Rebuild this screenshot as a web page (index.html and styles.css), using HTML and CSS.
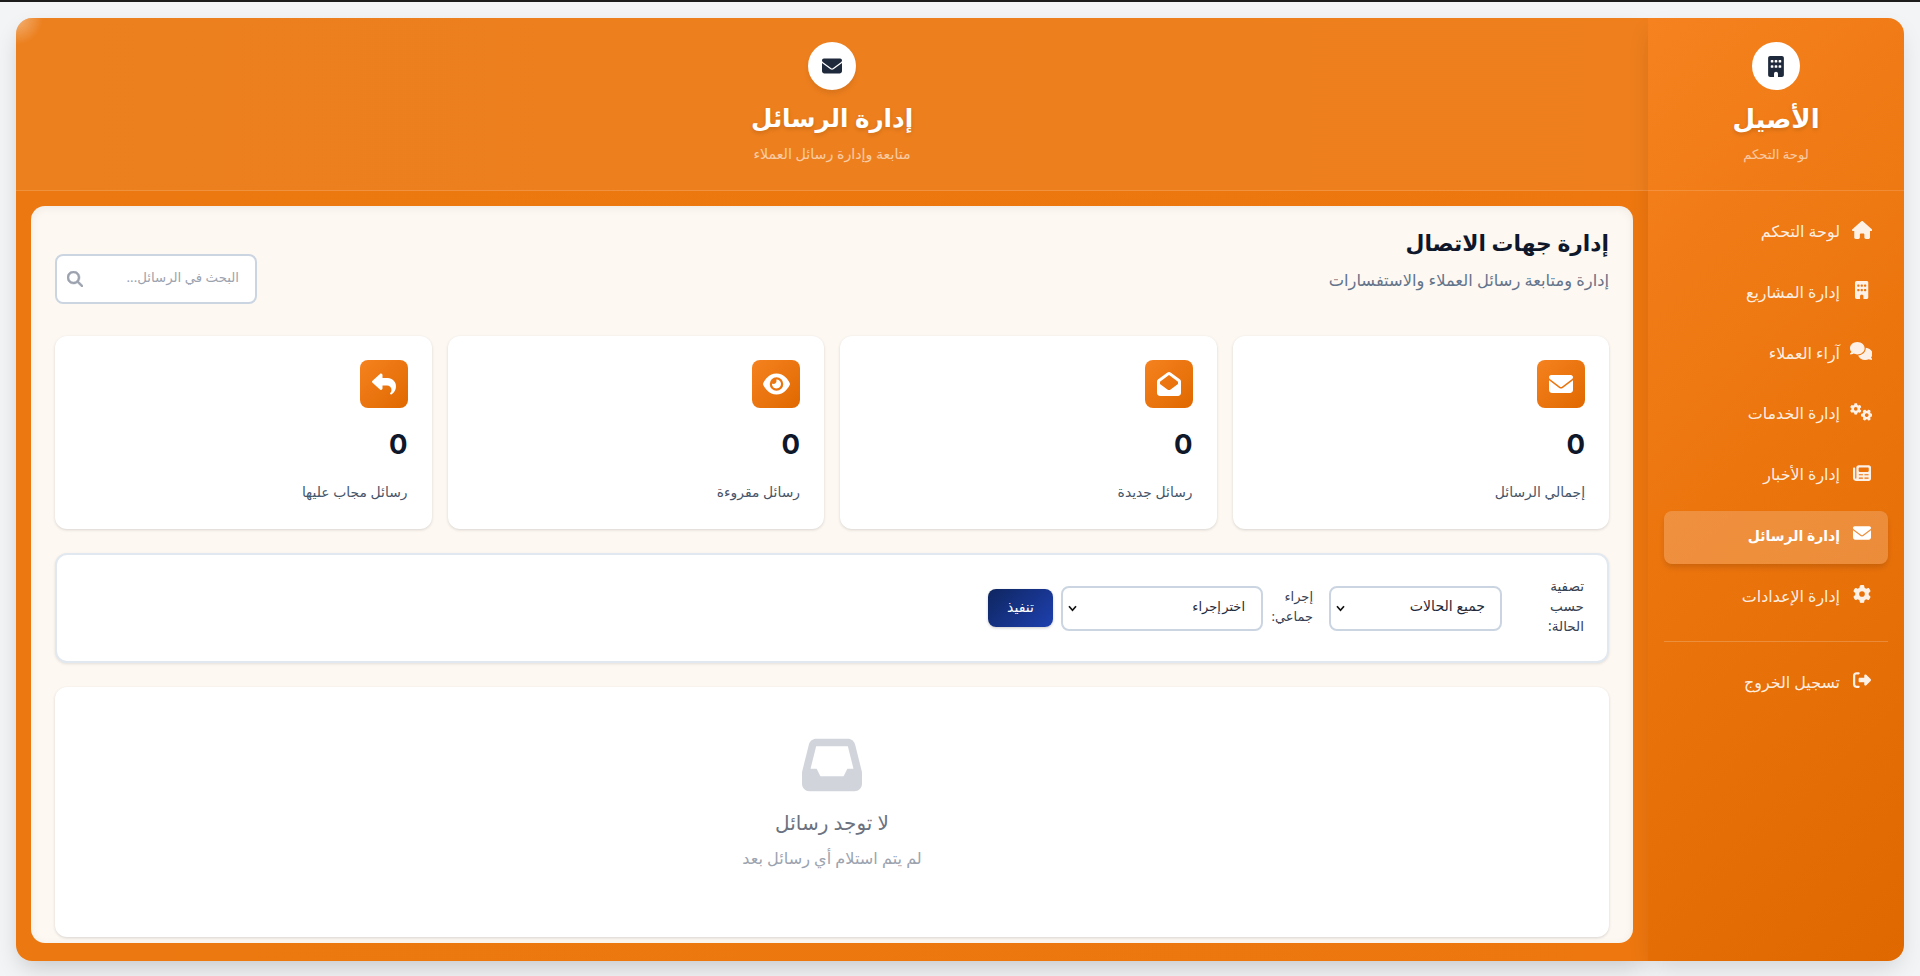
FILE: index.html
```html
<!DOCTYPE html>
<html lang="ar" dir="rtl">
<head>
    <meta charset="UTF-8">
    <title>إدارة الرسائل</title>
    <meta name="viewport" content="width=device-width, initial-scale=1">
    <link rel="stylesheet" href="styles.css">
</head>
<body>
    <!-- Icon set -->
    <svg class="sprite" width="0" height="0">
        <symbol id="envelope" viewBox="0 0 512 512"><path d="M48 64C21.5 64 0 85.5 0 112c0 15.1 7.1 29.3 19.2 38.4L236.8 313.6c11.4 8.5 27 8.5 38.4 0L492.8 150.4c12.1-9.1 19.2-23.3 19.2-38.4c0-26.5-21.5-48-48-48H48zM0 176V384c0 35.3 28.7 64 64 64H448c35.3 0 64-28.7 64-64V176L294.4 339.2c-22.8 17.1-54 17.1-76.8 0L0 176z"/></symbol>
        <symbol id="building" viewBox="0 0 384 512"><path d="M48 0C21.5 0 0 21.5 0 48V464c0 26.5 21.5 48 48 48h96V432c0-26.5 21.5-48 48-48s48 21.5 48 48v80h96c26.5 0 48-21.5 48-48V48c0-26.5-21.5-48-48-48H48zM64 240c0-8.8 7.2-16 16-16h32c8.8 0 16 7.2 16 16v32c0 8.8-7.2 16-16 16H80c-8.8 0-16-7.2-16-16V240zm112-16h32c8.8 0 16 7.2 16 16v32c0 8.8-7.2 16-16 16H176c-8.8 0-16-7.2-16-16V240c0-8.8 7.2-16 16-16zm80 16c0-8.8 7.2-16 16-16h32c8.8 0 16 7.2 16 16v32c0 8.8-7.2 16-16 16H272c-8.8 0-16-7.2-16-16V240zM80 96h32c8.8 0 16 7.2 16 16v32c0 8.8-7.2 16-16 16H80c-8.8 0-16-7.2-16-16V112c0-8.8 7.2-16 16-16zm80 16c0-8.8 7.2-16 16-16h32c8.8 0 16 7.2 16 16v32c0 8.8-7.2 16-16 16H176c-8.8 0-16-7.2-16-16V112zM272 96h32c8.8 0 16 7.2 16 16v32c0 8.8-7.2 16-16 16H272c-8.8 0-16-7.2-16-16V112c0-8.8 7.2-16 16-16z"/></symbol>
        <symbol id="home" viewBox="0 0 576 512"><path d="M575.8 255.5c0 18-15 32.1-32 32.1h-32l.7 160.2c0 2.7-.2 5.4-.5 8.1V472c0 22.1-17.9 40-40 40H456c-1.1 0-2.2 0-3.3-.1c-1.4 .1-2.8 .1-4.2 .1H416 392c-22.1 0-40-17.9-40-40V448 384c0-17.7-14.3-32-32-32H256c-17.7 0-32 14.3-32 32v64 24c0 22.1-17.9 40-40 40H160 128.1c-1.5 0-3-.1-4.5-.2c-1.2 .1-2.4 .2-3.6 .2H104c-22.1 0-40-17.9-40-40V360c0-.9 0-1.9 .1-2.8V287.6H32c-18 0-32-14-32-32.1c0-9 3-17 10-24L266.4 8c7-7 15-8 22-8s15 2 21 7L564.8 231.5c8 7 12 15 11 24z"/></symbol>
        <symbol id="comments" viewBox="0 0 640 512"><path d="M208 352c114.9 0 208-78.8 208-176S322.9 0 208 0S0 78.8 0 176c0 38.6 14.7 74.3 39.6 103.4c-3.5 9.4-8.7 17.7-14.2 24.7c-4.8 6.2-9.7 11-13.3 14.3c-1.8 1.6-3.3 2.9-4.3 3.7c-.5 .4-.9 .7-1.1 .8l-.2 .2C1 327.2-1.4 334.4 .8 340.9S9.1 352 16 352c21.8 0 43.8-5.6 62.1-12.5c9.2-3.5 17.8-7.4 25.3-11.4C134.1 343.3 169.8 352 208 352zM448 176c0 112.3-99.1 196.9-216.5 207C255.8 457.4 336.4 512 432 512c38.2 0 73.9-8.7 104.7-23.9c7.5 4 16 7.9 25.2 11.4c18.3 6.9 40.3 12.5 62.1 12.5c6.9 0 13.1-4.5 15.2-11.1c2.1-6.6-.2-13.8-5.8-17.9l-.2-.2c-.2-.2-.6-.4-1.1-.8c-1-.8-2.5-2-4.3-3.7c-3.6-3.3-8.5-8.1-13.3-14.3c-5.5-7-10.7-15.4-14.2-24.7c24.9-29 39.6-64.7 39.6-103.4c0-92.8-84.9-168.9-192.6-175.5c.4 5.1 .6 10.3 .6 15.5z"/></symbol>
        <symbol id="cog" viewBox="0 0 512 512"><path id="cog-shape" d="M495.9 166.6c3.2 8.7 .5 18.4-6.4 24.6l-43.3 39.4c1.1 8.3 1.7 16.8 1.7 25.4s-.6 17.1-1.7 25.4l43.3 39.4c6.9 6.2 9.6 15.9 6.4 24.6c-4.4 11.9-9.7 23.3-15.8 34.3l-4.7 8.1c-6.6 11-14 21.4-22.1 31.2c-5.9 7.2-15.7 9.6-24.5 6.8l-55.7-17.7c-13.4 10.3-28.2 18.9-44 25.4l-12.5 57.1c-2 9.1-9 16.3-18.2 17.8c-13.8 2.3-28 3.5-42.5 3.5s-28.7-1.2-42.5-3.5c-9.2-1.5-16.2-8.7-18.2-17.8l-12.5-57.1c-15.8-6.5-30.6-15.1-44-25.4L83.1 425.9c-8.8 2.8-18.6 .3-24.5-6.8c-8.1-9.8-15.5-20.2-22.1-31.2l-4.7-8.1c-6.1-11-11.4-22.4-15.8-34.3c-3.2-8.7-.5-18.4 6.4-24.6l43.3-39.4C64.6 273.1 64 264.6 64 256s.6-17.1 1.7-25.4L22.4 191.2c-6.9-6.2-9.6-15.9-6.4-24.6c4.4-11.9 9.7-23.3 15.8-34.3l4.7-8.1c6.6-11 14-21.4 22.1-31.2c5.9-7.2 15.7-9.6 24.5-6.8l55.7 17.7c13.4-10.3 28.2-18.9 44-25.4l12.5-57.1c2-9.1 9-16.3 18.2-17.8C227.3 1.2 241.5 0 256 0s28.7 1.2 42.5 3.5c9.2 1.5 16.2 8.7 18.2 17.8l12.5 57.1c15.8 6.5 30.6 15.1 44 25.4l55.7-17.7c8.8-2.8 18.6-.3 24.5 6.8c8.1 9.8 15.5 20.2 22.1 31.2l4.7 8.1c6.1 11 11.4 22.4 15.8 34.3zM256 336a80 80 0 1 0 0-160 80 80 0 1 0 0 160z"/></symbol>
        <symbol id="cogs" viewBox="0 0 640 512"><use href="#cog-shape" transform="translate(0 4) scale(.64)"/><use href="#cog-shape" transform="translate(476 344) scale(.64) rotate(30) translate(-256 -256)"/></symbol>
        <symbol id="newspaper" viewBox="0 0 512 512"><path d="M96 96c0-35.3 28.7-64 64-64H448c35.3 0 64 28.7 64 64V416c0 35.3-28.7 64-64 64H80c-44.2 0-80-35.8-80-80V128c0-17.7 14.3-32 32-32s32 14.3 32 32V400c0 8.8 7.2 16 16 16s16-7.2 16-16V96zm64 24v80c0 13.3 10.7 24 24 24H424c13.3 0 24-10.7 24-24V120c0-13.3-10.7-24-24-24H184c-13.3 0-24 10.7-24 24zm0 184c0 8.8 7.2 16 16 16h96c8.8 0 16-7.2 16-16s-7.2-16-16-16H176c-8.8 0-16 7.2-16 16zm160 0c0 8.8 7.2 16 16 16h96c8.8 0 16-7.2 16-16s-7.2-16-16-16H336c-8.8 0-16 7.2-16 16zM160 400c0 8.8 7.2 16 16 16h96c8.8 0 16-7.2 16-16s-7.2-16-16-16H176c-8.8 0-16 7.2-16 16zm160 0c0 8.8 7.2 16 16 16h96c8.8 0 16-7.2 16-16s-7.2-16-16-16H336c-8.8 0-16 7.2-16 16z"/></symbol>
        <symbol id="sign-out" viewBox="0 0 512 512"><path d="M377.9 105.9L500.7 228.7c7.2 7.2 11.3 17.1 11.3 27.3s-4.1 20.1-11.3 27.3L377.9 406.1c-6.4 6.4-15 9.9-24 9.9c-18.7 0-33.9-15.2-33.9-33.9l0-62.1-128 0c-17.7 0-32-14.3-32-32l0-64c0-17.7 14.3-32 32-32l128 0 0-62.1c0-18.7 15.2-33.9 33.9-33.9c9 0 17.6 3.6 24 9.9zM160 96L96 96c-17.7 0-32 14.3-32 32l0 256c0 17.7 14.3 32 32 32l64 0c17.7 0 32 14.3 32 32s-14.3 32-32 32l-64 0c-53 0-96-43-96-96L0 128C0 75 43 32 96 32l64 0c17.7 0 32 14.3 32 32s-14.3 32-32 32z"/></symbol>
        <symbol id="search" viewBox="0 0 512 512"><path d="M416 208c0 45.9-14.9 88.3-40 122.7L502.6 457.4c12.5 12.5 12.5 32.8 0 45.3s-32.8 12.5-45.3 0L330.7 376c-34.4 25.2-76.8 40-122.7 40C93.1 416 0 322.9 0 208S93.1 0 208 0S416 93.1 416 208zM208 352a144 144 0 1 0 0-288 144 144 0 1 0 0 288z"/></symbol>
        <symbol id="envelope-open" viewBox="0 0 512 512"><path d="M64 208.1L256 65.9 448 208.1v47.4L289.5 373c-9.7 7.2-21.4 11-33.5 11s-23.8-3.9-33.5-11L64 255.5V208.1zM256 0c-12.1 0-23.8 3.9-33.5 11L25.9 156.7C9.6 168.8 0 187.8 0 208.1V448c0 35.3 28.7 64 64 64H448c35.3 0 64-28.7 64-64V208.1c0-20.3-9.6-39.4-25.9-51.4L289.5 11C279.8 3.9 268.1 0 256 0z"/></symbol>
        <symbol id="eye" viewBox="0 0 576 512"><path d="M288 32c-80.8 0-145.5 36.8-192.6 80.6C48.6 156 17.3 208 2.5 243.7c-3.3 7.9-3.3 16.7 0 24.6C17.3 304 48.6 356 95.4 399.4C142.5 443.2 207.2 480 288 480s145.5-36.8 192.6-80.6c46.8-43.5 78.1-95.4 93-131.1c3.3-7.9 3.3-16.7 0-24.6c-14.9-35.7-46.2-87.7-93-131.1C433.5 68.8 368.8 32 288 32zM144 256a144 144 0 1 1 288 0 144 144 0 1 1 -288 0zm144-64c0 35.3-28.7 64-64 64c-7.1 0-13.9-1.2-20.3-3.3c-5.5-1.8-11.9 1.6-11.7 7.4c.3 6.9 1.3 13.8 3.2 20.7c13.7 51.2 66.4 81.6 117.6 67.9s81.6-66.4 67.9-117.6c-11.1-41.5-47.8-69.4-88.6-71.1c-5.8-.2-9.2 6.1-7.4 11.7c2.1 6.4 3.3 13.2 3.3 20.3z"/></symbol>
        <symbol id="reply" viewBox="0 0 512 512"><path d="M205 34.8c11.5 5.1 19 16.6 19 29.2v64H336c97.2 0 176 78.8 176 176c0 113.3-81.5 163.9-100.2 174.1c-2.5 1.4-5.3 1.9-8.1 1.9c-10.9 0-19.7-8.9-19.7-19.7c0-7.5 4.3-14.4 9.8-19.5c9.4-8.8 22.2-26.4 22.2-56.7c0-53-43-96-96-96H224v64c0 12.6-7.4 24.1-19 29.2s-25 3-34.4-5.4l-160-144C3.9 225.7 0 217.1 0 208s3.9-17.7 10.6-23.8l160-144c9.4-8.5 22.9-10.6 34.4-5.4z"/></symbol>
        <symbol id="inbox" viewBox="0 0 512 512"><path d="M121 32C91.6 32 66 52 58.9 80.5L1.9 308.4C.6 313.5 0 318.7 0 323.9V416c0 35.3 28.7 64 64 64H448c35.3 0 64-28.7 64-64V323.9c0-5.2-.6-10.4-1.9-15.5l-57-227.9C446 52 420.4 32 391 32H121zm0 64H391l48 192H387l-32 64H157l-32-64H73L121 96z"/></symbol>
    </svg>

    <div class="layout">
        <aside class="sidebar">
            <div class="top-box">
                <div class="logo"><svg width="16" height="21"><use href="#building"/></svg></div>
                <h1 class="brand">الأصيل</h1>
                <p class="brand-sub">لوحة التحكم</p>
            </div>
            <nav class="nav">
                <a class="nav-item" href="#"><span class="nav-icon"><svg width="20.25" height="18"><use href="#home"/></svg></span><span class="nav-text">لوحة التحكم</span></a>
                <a class="nav-item" href="#"><span class="nav-icon"><svg width="13.5" height="18"><use href="#building"/></svg></span><span class="nav-text">إدارة المشاريع</span></a>
                <a class="nav-item" href="#"><span class="nav-icon"><svg width="22.5" height="18"><use href="#comments"/></svg></span><span class="nav-text">آراء العملاء</span></a>
                <a class="nav-item" href="#"><span class="nav-icon"><svg width="22.5" height="18"><use href="#cogs"/></svg></span><span class="nav-text">إدارة الخدمات</span></a>
                <a class="nav-item" href="#"><span class="nav-icon"><svg width="18" height="18"><use href="#newspaper"/></svg></span><span class="nav-text">إدارة الأخبار</span></a>
                <a class="nav-item active" href="#"><span class="nav-icon"><svg width="18" height="18"><use href="#envelope"/></svg></span><span class="nav-text">إدارة الرسائل</span></a>
                <a class="nav-item" href="#"><span class="nav-icon"><svg width="18" height="18"><use href="#cog"/></svg></span><span class="nav-text">إدارة الإعدادات</span></a>
                <div class="nav-divider"></div>
                <a class="nav-item" href="#"><span class="nav-icon"><svg width="18" height="18"><use href="#sign-out"/></svg></span><span class="nav-text">تسجيل الخروج</span></a>
            </nav>
        </aside>

        <main class="main">
            <header class="top-box main-top">
                <div class="logo"><svg width="20" height="20"><use href="#envelope"/></svg></div>
                <h1 class="brand">إدارة الرسائل</h1>
                <p class="brand-sub">متابعة وإدارة رسائل العملاء</p>
            </header>

            <section class="panel">
                <div class="page-header">
                    <div>
                        <h2 class="page-title">إدارة جهات الاتصال</h2>
                        <p class="page-sub">إدارة ومتابعة رسائل العملاء والاستفسارات</p>
                    </div>
                    <div class="search">
                        <input type="text" class="search-input" placeholder="البحث في الرسائل...">
                        <svg class="search-icon" width="16" height="16"><use href="#search"/></svg>
                    </div>
                </div>

                <div class="stats">
                    <div class="stat">
                        <div class="stat-icon"><svg width="24" height="24"><use href="#envelope"/></svg></div>
                        <div class="stat-number">0</div>
                        <div class="stat-label">إجمالي الرسائل</div>
                    </div>
                    <div class="stat">
                        <div class="stat-icon"><svg width="24" height="24"><use href="#envelope-open"/></svg></div>
                        <div class="stat-number">0</div>
                        <div class="stat-label">رسائل جديدة</div>
                    </div>
                    <div class="stat">
                        <div class="stat-icon"><svg width="27" height="24"><use href="#eye"/></svg></div>
                        <div class="stat-number">0</div>
                        <div class="stat-label">رسائل مقروءة</div>
                    </div>
                    <div class="stat">
                        <div class="stat-icon"><svg width="24" height="24"><use href="#reply"/></svg></div>
                        <div class="stat-number">0</div>
                        <div class="stat-label">رسائل مجاب عليها</div>
                    </div>
                </div>

                <div class="filters">
                    <label class="filter-label status-label">تصفية<br>حسب<br>الحالة:</label>
                    <div class="select status-select">
                        <span class="select-text">جميع الحالات</span>
                        <svg class="chevron" width="9" height="7" viewBox="0 0 9 7"><path d="M1 1.2L4.5 5.2 8 1.2"/></svg>
                    </div>
                    <label class="filter-label bulk-label">إجراء<br>جماعي:</label>
                    <div class="select bulk-select">
                        <span class="select-text">اختر إجراء</span>
                        <svg class="chevron" width="9" height="7" viewBox="0 0 9 7"><path d="M1 1.2L4.5 5.2 8 1.2"/></svg>
                    </div>
                    <button class="run-btn">تنفيذ</button>
                </div>

                <div class="empty">
                    <svg class="empty-icon" width="60" height="60"><use href="#inbox"/></svg>
                    <h3 class="empty-title">لا توجد رسائل</h3>
                    <p class="empty-text">لم يتم استلام أي رسائل بعد</p>
                </div>
            </section>
        </main>
    </div>
</body>
</html>
```

FILE: styles.css
```css
* { box-sizing: border-box; margin: 0; padding: 0; }
body {
    font-family: "Noto Sans", "DejaVu Sans", sans-serif;
    background: #f3f4f6; border-top: 2px solid #1c1c1c;
    height: 976px; padding: 16px 16px 15px; overflow: hidden;
}
svg { fill: currentColor; display: block; flex: none; }
.sprite { position: absolute; }
.layout { display: flex; height: 943px; }

/* Sidebar */
.sidebar {
    width: 256px; flex: none; position: relative; z-index: 1; color: #fff;
    background: linear-gradient(135deg, #f5821f 0%, #ec750e 45%, #e06800 100%);
    border-radius: 0 16px 16px 0; box-shadow: 0 10px 25px -5px rgba(0,0,0,.15);
}
.top-box {
    height: 173px; padding-top: 24px; display: flex; flex-direction: column; align-items: center;
    border-bottom: 1px solid rgba(255,255,255,.15); color: #fff;
}
.logo {
    width: 48px; height: 48px; border-radius: 50%; background: #fff; color: #1e293b;
    display: flex; align-items: center; justify-content: center;
}
.main-top .logo { box-shadow: 0 4px 6px -1px rgba(0,0,0,.1); }
.brand { font-size: 26px; line-height: 36px; height: 36px; margin-top: 10px; font-weight: 700; text-shadow: 0 2px 4px rgba(0,0,0,.15); white-space: nowrap; }
.main-top .brand { font-size: 24.6px; }
.brand-sub { font-size: 13.2px; line-height: 20px; margin-top: 8px; opacity: .6; white-space: nowrap; }
.main-top .brand-sub { font-size: 14.2px; }
.nav { padding: 16px; }
.nav-item {
    display: flex; align-items: center; gap: 12px; height: 53px; margin-bottom: 7.8px; padding: 0 16px 6px;
    border-radius: 8px; color: rgba(255,255,255,.9); text-decoration: none; font-size: 15.9px;
}
.nav-icon { width: 20px; display: flex; justify-content: center; margin-top: -2px; }
.nav-icon svg[width="22.5"] { margin-right: 2.5px; }
.nav-text { line-height: 24px; white-space: nowrap; margin-top: 1px; }
.nav-item.active { background: rgba(255,255,255,.2); color: #fff; font-size: 14px; font-weight: 700; box-shadow: 0 4px 6px -1px rgba(0,0,0,.15); }
.active .nav-text { margin-top: 3px; }
.nav-divider { height: 1px; background: rgba(255,255,255,.2); margin: 16px 0; }

/* Main area */
.main {
    flex: 1; min-width: 0; background: linear-gradient(90deg, #eb7810, #ee770f);
    border-radius: 16px 0 0 16px; box-shadow: 0 10px 25px -5px rgba(0,0,0,.2);
}
.main-top { background: radial-gradient(circle at 0 0, rgba(255,255,255,.35) 4px, transparent 27px) no-repeat 0 0 / 40px 40px, rgba(255,255,255,.06); border-radius: 16px 0 0 0; }
.panel {
    margin: 15px 15px 0; height: 737px; padding: 24px 24px 0; background: #fdf8f2;
    border-radius: 14px; box-shadow: inset 0 2px 10px rgba(0,0,0,.06);
}
.page-header { display: flex; justify-content: space-between; height: 82px; margin-bottom: 24px; }
.page-title { font-size: 21.8px; line-height: 30px; color: #0f172a; font-weight: 700; margin-top: -2px; }
.page-sub { font-size: 16.3px; line-height: 24px; color: #64748b; margin-top: 10px; }
.search { position: relative; width: 202px; height: 50px; margin-top: 24px; }
.search-input {
    width: 100%; height: 100%; border: 2px solid #cbd5e1; border-radius: 8px; background: #fff;
    padding: 0 16px 4px 40px; font: 13.3px "Noto Sans", "DejaVu Sans", sans-serif;
}
.search-input::placeholder { color: #9ca3af; }
.search-icon { position: absolute; left: 12px; top: 17px; color: #9ca3af; stroke: #9ca3af; stroke-width: 16px; overflow: visible; }

.stats { display: grid; grid-template-columns: repeat(4, 1fr); gap: 16px; margin-bottom: 24px; }
.stat { height: 193px; background: #fff; border-radius: 12px; padding: 24px; box-shadow: 0 1px 3px rgba(0,0,0,.15); }
.stat-icon {
    width: 48px; height: 48px; border-radius: 8px; color: #fff; display: flex; align-items: center; justify-content: center;
    background: linear-gradient(135deg, #f5821f, #e06800);
}
.stat-number { font-family: Inter, "Noto Sans", sans-serif; font-size: 27.5px; line-height: 38px; margin-top: 17px; font-weight: 700; color: #0f172a; }
.stat-label { font-size: 13.9px; line-height: 20px; margin-top: 19px; color: #475569; }

.filters {
    display: flex; align-items: center; height: 110px; padding: 0 23px; margin-bottom: 24px; background: #fff;
    border: 2px solid #e2e8f0; border-radius: 12px; box-shadow: 0 1px 3px rgba(0,0,0,.1);
}
.filter-label { font-size: 13.6px; line-height: 20px; color: #374151; margin-top: -4px; }
.status-label { width: 82px; }
.bulk-label { width: 34px; margin: -4px 16px 0; font-size: 13px; white-space: nowrap; }
.select {
    height: 45px; border: 2px solid #cbd5e1; border-radius: 8px; display: flex; align-items: center;
    justify-content: space-between; padding: 0 15px 0 5px; font-size: 14.1px; color: #1e293b;
}
.select-text { margin-top: -5px; }
.status-select { width: 173px; }
.bulk-select { width: 202px; font-size: 13px; padding-right: 16px; word-spacing: -2px; }
.chevron { fill: none; stroke: #111; stroke-width: 1.7; }
.run-btn {
    width: 65px; height: 38px; margin-right: 8px; border: 0; border-radius: 8px; color: #fff; padding-bottom: 4px;
    font: 500 14px "Noto Sans", "DejaVu Sans", sans-serif;
    background: linear-gradient(135deg, #0f2660, #1e40af); box-shadow: 0 1px 3px rgba(0,0,0,.2);
}

.empty {
    height: 250px; background: #fff; border-radius: 12px; padding-top: 48px; box-shadow: 0 1px 3px rgba(0,0,0,.15);
    display: flex; flex-direction: column; align-items: center;
}
.empty-icon { color: #d1d5db; }
.empty-title { font-size: 20px; line-height: 28px; margin-top: 14px; color: #6b7280; font-weight: 500; }
.empty-text { font-size: 16.1px; line-height: 24px; margin-top: 9px; color: #9ca3af; }
```
